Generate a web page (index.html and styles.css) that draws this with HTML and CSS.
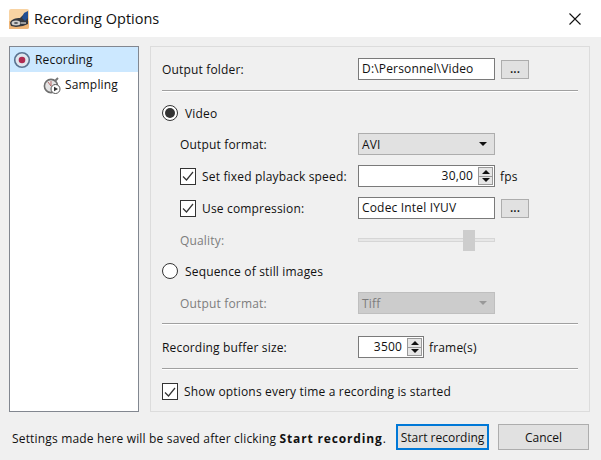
FILE: index.html
```html
<!DOCTYPE html>
<html lang="en">

<head>
    <meta charset="UTF-8">
    <meta name="viewport" content="width=device-width, initial-scale=1.0">
    <title>Recording Options</title>
    <link rel="stylesheet" href="styles.css">
</head>

<body>

    <header class="titlebar">
        <svg class="app-icon" width="20" height="20" viewBox="0 0 20 20">
            <rect x="0" y="0" width="20" height="20" rx="2" fill="#f8d3a3"/>
            <path d="M0 20 L0 12 L20 12 L20 18 Q20 20 18 20 Z" fill="#eeb577"/>
            <path d="M1 14 C2 10 7 9 11 9 L15 5 L19 3 L19 15 L14 17 L7 18 L2 17 Z" fill="#35383f"/>
            <path d="M13 9 L15 4 L19 2 L19 9 L16 12 Z" fill="#234f93"/>
            <ellipse cx="7" cy="14" rx="4.5" ry="2.5" fill="#cfcfcf"/>
            <ellipse cx="7" cy="14" rx="2" ry="1" fill="#55585e"/>
            <rect x="12" y="13" width="5" height="2" fill="#9a9a9a"/>
        </svg>
        <span class="title-text">Recording Options</span>
        <svg class="close-icon" width="12" height="12" viewBox="0 0 12 12">
            <path d="M0.5 0.5 L11.5 11.5 M11.5 0.5 L0.5 11.5" stroke="#111" stroke-width="1.1" fill="none"/>
        </svg>
    </header>

    <main class="content">
        <nav class="tree">
            <div class="tree-item selected">
                <svg width="18" height="18" viewBox="0 0 18 18">
                    <circle cx="9" cy="9" r="7.3" fill="#dfe6ee" stroke="#5a7391" stroke-width="1.6"/>
                    <circle cx="9" cy="9" r="3.3" fill="#b02a50"/>
                </svg>
                <span>Recording</span>
            </div>
            <div class="tree-item child">
                <svg width="18" height="18" viewBox="0 0 18 18">
                    <circle cx="8" cy="10" r="6.6" fill="#e4e4e4" stroke="#6f6f6f" stroke-width="1.6"/>
                    <path d="M8 10 L5 6 M8 10 L8 5" stroke="#b56a6a" stroke-width="1" fill="none"/>
                    <path d="M12 5 L15 2" stroke="#777" stroke-width="2" fill="none"/>
                    <circle cx="12.5" cy="13" r="4.5" fill="#fff" stroke="#555"/>
                    <path d="M11 10.8 L15 13 L11 15.2 Z" fill="#333"/>
                </svg>
                <span>Sampling</span>
            </div>
        </nav>

        <section class="panel">
            <div class="row folder-row">
                <label class="label">Output folder:</label>
                <div class="input">D:\Personnel\Video</div>
                <button class="dots">...</button>
            </div>
            <hr class="sep sep-folder">

            <div class="option video-option">
                <span class="radio checked"></span>
                <span>Video</span>
            </div>
            <div class="row sub format-row">
                <label class="label">Output format:</label>
                <div class="select">AVI<span class="arrow"></span></div>
            </div>
            <div class="row sub speed-row">
                <span class="check"><svg width="14" height="14" viewBox="0 0 14 14"><path d="M2 7.5 L5.5 11 L12 3" stroke="#333" stroke-width="1.2" fill="none"/></svg></span>
                <label class="label check-label">Set fixed playback speed:</label>
                <div class="input spin">
                    <span class="spin-value">30,00</span>
                    <span class="spinner"><i class="up"></i><i class="down"></i></span>
                </div>
                <span class="unit">fps</span>
            </div>
            <div class="row sub codec-row">
                <span class="check"><svg width="14" height="14" viewBox="0 0 14 14"><path d="M2 7.5 L5.5 11 L12 3" stroke="#333" stroke-width="1.2" fill="none"/></svg></span>
                <label class="label check-label">Use compression:</label>
                <div class="input">Codec Intel IYUV</div>
                <button class="dots">...</button>
            </div>
            <div class="row sub quality-row">
                <label class="label disabled">Quality:</label>
                <div class="slider"><span class="thumb"></span></div>
            </div>

            <div class="option still-option">
                <span class="radio"></span>
                <span>Sequence of still images</span>
            </div>
            <div class="row sub still-format-row">
                <label class="label disabled">Output format:</label>
                <div class="select off">Tiff<span class="arrow"></span></div>
            </div>
            <hr class="sep sep-still">

            <div class="row buffer-row">
                <label class="label">Recording buffer size:</label>
                <div class="input spin small">
                    <span class="spin-value">3500</span>
                    <span class="spinner"><i class="up"></i><i class="down"></i></span>
                </div>
                <span class="unit">frame(s)</span>
            </div>
            <hr class="sep sep-buffer">

            <div class="show-row">
                <span class="check"><svg width="14" height="14" viewBox="0 0 14 14"><path d="M2 7.5 L5.5 11 L12 3" stroke="#333" stroke-width="1.2" fill="none"/></svg></span>
                <span>Show options every time a recording is started</span>
            </div>
        </section>
    </main>

    <footer class="footer">
        <p>Settings made here will be saved after clicking <b>Start recording</b>.</p>
        <button class="btn primary">Start recording</button>
        <button class="btn">Cancel</button>
    </footer>

</body>

</html>
```

FILE: styles.css
```css
* {
    box-sizing: border-box;
}

html,
body {
    margin: 0;
    padding: 0;
}

body {
    width: 601px;
    height: 460px;
    overflow: hidden;
    background-color: #f0f0f0;
    color: #111;
    font-family: 'Open Sans', 'Noto Sans', sans-serif;
    font-size: 12px;
    letter-spacing: 0.17px;
}

.titlebar {
    height: 37px;
    background-color: #fff;
    display: flex;
    align-items: center;
    padding: 0 20px 0 9px;
}

.app-icon {
    margin-right: 5px;
}

.title-text {
    flex: 1;
    font-size: 14.5px;
    letter-spacing: 0;
}

.content {
    display: flex;
    padding: 9px 11px 0 9px;
    gap: 11px;
    height: 375px;
}

.tree {
    width: 130px;
    background-color: #fff;
    border: 1px solid #828790;
}

.tree-item {
    height: 25px;
    display: flex;
    align-items: center;
    gap: 4px;
    padding-left: 3px;
}

.tree-item.selected {
    background-color: #cce8ff;
}

.tree-item.child {
    padding-left: 33px;
}

.panel {
    width: 440px;
    border: 1px solid #dcdcdc;
    padding: 11px 11px 0;
}

.row {
    display: flex;
    align-items: center;
    height: 22px;
}

.label {
    width: 196px;
    flex-shrink: 0;
}

.sub {
    padding-left: 18px;
}

.sub .label {
    width: 178px;
}

.sub .check-label {
    width: 156px;
}

.disabled {
    color: #7d7d7d;
}

.quality-row .label {
    margin-top: -1px;
}

.check {
    width: 16px;
    height: 17px;
    margin-right: 6px;
    border: 1px solid #333;
    background-color: #fff;
    display: flex;
    align-items: center;
    justify-content: center;
    flex-shrink: 0;
}

.input {
    width: 137px;
    height: 22px;
    border: 1px solid #7a7a7a;
    background-color: #fff;
    padding-left: 3px;
    line-height: 20px;
}

.dots {
    width: 28px;
    height: 19px;
    margin-left: 6px;
    padding: 0;
    border: 1px solid #adadad;
    background-color: #e1e1e1;
    font: inherit;
    font-weight: 600;
    color: #111;
    line-height: 14px;
}

.sep {
    margin: 0;
    height: 2px;
    border: none;
    border-top: 1px solid #a0a0a0;
    border-bottom: 1px solid #fff;
}

.sep-folder {
    margin-top: 10px;
}

.option {
    display: flex;
    align-items: center;
    gap: 7px;
    height: 18px;
}

.video-option {
    margin-top: 12px;
}

.still-option {
    margin-top: 10px;
}

.radio {
    width: 16px;
    height: 16px;
    border: 1px solid #333;
    border-radius: 50%;
    background-color: #fff;
    display: flex;
    align-items: center;
    justify-content: center;
}

.radio.checked::after {
    content: '';
    width: 10px;
    height: 10px;
    border-radius: 50%;
    background-color: #333;
}

.format-row {
    margin-top: 11px;
}

.speed-row {
    margin-top: 10px;
}

.codec-row {
    margin-top: 10px;
}

.quality-row {
    margin-top: 11px;
}

.still-format-row {
    margin-top: 12px;
}

.select {
    width: 137px;
    height: 22px;
    border: 1px solid #adadad;
    background-color: #e1e1e1;
    padding-left: 3px;
    line-height: 21px;
    position: relative;
}

.select.off {
    background-color: #ccc;
    border-color: #bfbfbf;
    color: #7d7d7d;
}

.arrow {
    position: absolute;
    right: 7px;
    top: 8px;
    border-left: 4px solid transparent;
    border-right: 4px solid transparent;
    border-top: 4px solid #111;
}

.select.off .arrow {
    border-top-color: #999;
}

.spin {
    display: flex;
    align-items: center;
    justify-content: flex-end;
    padding: 0 1px 0 0;
}

.spin.small {
    width: 66px;
}

.spin-value {
    margin-right: 5px;
}

.spinner {
    width: 15px;
    height: 18px;
    display: flex;
    flex-direction: column;
    gap: 0;
    border: 1px solid #999;
    background-color: #e6e6e6;
}

.spinner i {
    flex: 1;
    display: flex;
    align-items: center;
    justify-content: center;
}

.spinner i + i {
    border-top: 1px solid #999;
}

.spinner .up::after {
    content: '';
    border-left: 4px solid transparent;
    border-right: 4px solid transparent;
    border-bottom: 4px solid #111;
}

.spinner .down::after {
    content: '';
    border-left: 4px solid transparent;
    border-right: 4px solid transparent;
    border-top: 4px solid #111;
}

.unit {
    margin-left: 5px;
}

.slider {
    width: 137px;
    height: 4px;
    margin-top: -2px;
    background-color: #e7e7e7;
    border: 1px solid #d6d6d6;
    position: relative;
}

.thumb {
    position: absolute;
    left: 104px;
    top: -9px;
    width: 12px;
    height: 21px;
    background-color: #cdcdcd;
}

.sep-still {
    margin-top: 9px;
}

.buffer-row {
    margin-top: 11px;
}

.sep-buffer {
    margin-top: 10px;
}

.show-row {
    display: flex;
    align-items: center;
    margin-top: 13px;
}

.footer {
    display: flex;
    align-items: center;
    padding: 2px 12px 0 12px;
    height: 48px;
}

.footer p {
    margin: 2px 0 0;
    width: 384px;
    flex-shrink: 0;
}

.footer b {
    letter-spacing: 0.85px;
}

.btn {
    width: 91px;
    height: 26px;
    padding: 0;
    border: 1px solid #adadad;
    background-color: #e1e1e1;
    font: inherit;
    color: #111;
}

.btn.primary {
    width: 93px;
    border: 2px solid #0078d7;
    margin-right: 9px;
}
```
